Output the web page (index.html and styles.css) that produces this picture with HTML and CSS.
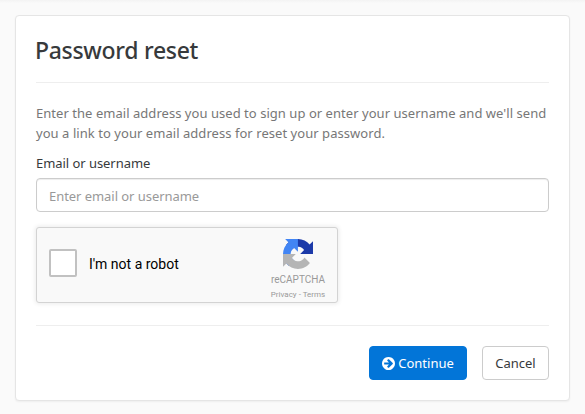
FILE: index.html
```html
<!DOCTYPE html>
<html lang="en">
<head>
<meta charset="utf-8">
<title>Password reset</title>
<link rel="stylesheet" href="styles.css">
</head>
<body>
<main class="card">
  <h1><span>Password reset</span></h1>
  <p class="intro"><span class="line-one">Enter the email address you used to sign up or enter your username and we'll send</span><br><span class="line-two">you a link to your email address for reset your password.</span></p>
  <label for="account"><span>Email or username</span></label>
  <input id="account" type="text" placeholder="Enter email or username">
  <section class="captcha">
    <span class="check"></span>
    <span class="robot">I'm not a robot</span>
    <div class="brand">
      <svg class="logo" viewBox="0 0 64 64">
        <path fill="#1c3aa9" d="M64 31.955l-.033-1.37V4.687l-7.16 7.16C50.948 4.674 42.033.093 32.05.093c-10.4 0-19.622 4.96-25.458 12.64l11.736 11.86a15.55 15.55 0 0 1 4.754-5.334c2.05-1.6 4.952-2.906 8.968-2.906.485 0 .86.057 1.135.163 4.976.393 9.288 3.14 11.828 7.124l-8.307 8.307L64 31.953"/>
        <path fill="#4285f4" d="M31.862.094l-1.37.033H4.594l7.16 7.16C4.58 13.147 0 22.06 0 32.046c0 10.4 4.96 19.622 12.64 25.458L24.5 45.768a15.55 15.55 0 0 1-5.334-4.754c-1.6-2.05-2.906-4.952-2.906-8.968 0-.485.057-.86.163-1.135.393-4.976 3.14-9.288 7.124-11.828l8.307 8.307L31.86.095"/>
        <path fill="#b5b5b5" d="M.001 32.045l.033 1.37v25.898l7.16-7.16c5.86 7.173 14.774 11.754 24.76 11.754 10.4 0 19.622-4.96 25.458-12.64l-11.736-11.86a15.55 15.55 0 0 1-4.754 5.334c-2.05 1.6-4.952 2.906-8.968 2.906-.485 0-.86-.057-1.135-.163-4.976-.393-9.288-3.14-11.828-7.124l8.307-8.307c-10.522.04-22.4.066-27.295-.005"/>
      </svg>
      <span class="name">reCAPTCHA</span>
      <span class="terms">Privacy - Terms</span>
    </div>
  </section>
  <footer>
    <button class="primary"><svg class="arrow" viewBox="128 128 1536 1536"><path fill="currentColor" d="M1413 896q0-27-18-45l-91-91-362-362q-18-18-45-18t-45 18l-91 91q-18 18-18 45t18 45l189 189h-502q-26 0-45 19t-19 45v128q0 26 19 45t45 19h502l-189 189q-19 19-19 45t19 45l91 91q18 18 45 18t45-18l362-362 91-91q18-18 18-45zm251 0q0 209-103 385.5t-279.5 279.5-385.5 103-385.5-103-279.5-279.5-103-385.5 103-385.5 279.5-279.5 385.5-103 385.5 103 279.5 279.5 103 385.5z"/></svg><span>Continue</span></button>
    <button class="secondary"><span>Cancel</span></button>
  </footer>
</main>
</body>
</html>
```
FILE: styles.css
```css
* { box-sizing: border-box; }
body {
  margin: 0;
  height: 414px;
  padding: 15px;
  overflow: hidden;
  background: linear-gradient(#f3f3f3, #fafafa 3px);
  font-family: "Noto Sans", "Open Sans", sans-serif;
  font-size: 13px;
  line-height: 20px;
  color: #373a3c;
}
.card {
  width: 555px;
  height: 386px;
  padding: 20px;
  background: #fff;
  border: 1px solid #e5e5e5;
  border-radius: 4px;
  box-shadow: 0 1px 2px rgba(0, 0, 0, .05);
}
h1 {
  height: 47px;
  margin: 0;
  padding-top: 1px;
  border-bottom: 1px solid #eee;
  font-size: 23px;
  font-weight: 500;
  letter-spacing: -.3px;
  line-height: 26px;
}
h1 span { margin-left: -1px; }
.intro {
  margin: 20px 0 10px;
  color: #777;
  white-space: nowrap;
}
.line-one { letter-spacing: .04px; }
.line-two { letter-spacing: .05px; }
label {
  display: block;
  height: 25px;
  letter-spacing: -.05px;
}
input {
  display: block;
  width: 513px;
  height: 34px;
  padding: 1px 12px 0;
  background: #fff;
  border: 1px solid #ccc;
  border-radius: 4px;
  box-shadow: inset 0 1px 1px rgba(0, 0, 0, .075);
  font: inherit;
  letter-spacing: -.05px;
}
input::placeholder { color: #999; opacity: 1; }
.captcha {
  display: flex;
  align-items: center;
  width: 302px;
  height: 76px;
  margin-top: 15px;
  padding-left: 12px;
  background: #f9f9f9;
  border: 1px solid #d3d3d3;
  border-radius: 3px;
  box-shadow: 0 0 4px 1px rgba(0, 0, 0, .08);
  font-family: Roboto, sans-serif;
}
.check {
  width: 28px;
  height: 28px;
  margin-top: -4px;
  background: #fff;
  border: 2px solid #c1c1c1;
  border-radius: 2px;
}
.robot {
  margin: -2px 0 0 12px;
  color: #000;
  font-size: 14px;
  line-height: 17px;
}
.brand {
  display: flex;
  flex-direction: column;
  align-items: center;
  width: 60px;
  height: 74px;
  margin: 0 9px 0 auto;
  padding-top: 11px;
  color: #999;
  white-space: nowrap;
}
.logo { width: 30px; height: 30px; }
.name { margin-top: 5px; font-size: 10px; line-height: 12px; }
.terms { margin-top: 4px; font-size: 8px; line-height: 10px; }
footer {
  display: flex;
  justify-content: flex-end;
  gap: 15px;
  margin-top: 22px;
  padding-top: 20px;
  border-top: 1px solid #eee;
}
button {
  display: flex;
  align-items: center;
  justify-content: center;
  height: 34px;
  padding: 0;
  border: 1px solid #ccc;
  border-radius: 4px;
  background: #fff;
  color: #373a3c;
  font: inherit;
}
.primary {
  width: 98px;
  gap: 3px;
  background: #0275d8;
  border-color: #0275d8;
  color: #fff;
}
.secondary { width: 67px; }
.arrow { width: 13px; height: 13px; }
```
